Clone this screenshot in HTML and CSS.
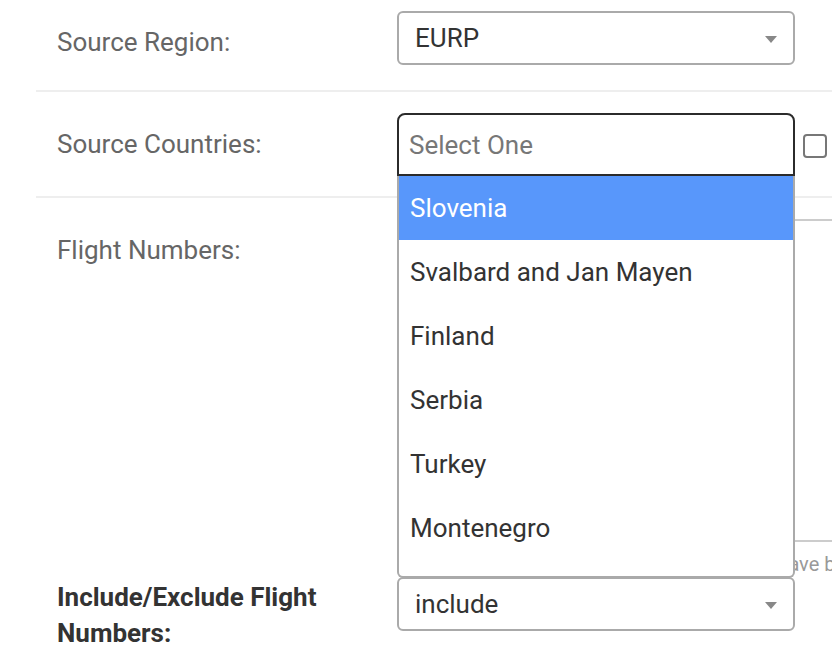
FILE: index.html
```html
<!DOCTYPE html>
<html>
<head>
<meta charset="utf-8">
<link rel="stylesheet" href="styles.css">
</head>
<body>
<div class="form">
  <div class="row first">
    <div class="label">Source Region:</div>
    <div class="control">
      <div class="select"><span class="value">EURP</span><span class="arrow"></span></div>
    </div>
  </div>
  <div class="row second">
    <div class="label">Source Countries:</div>
    <div class="control with-check">
      <div class="select-wrap">
        <div class="select open"><span class="placeholder">Select One</span></div>
        <ul class="dropdown">
          <li class="hl">Slovenia</li>
          <li>Svalbard and Jan Mayen</li>
          <li>Finland</li>
          <li>Serbia</li>
          <li>Turkey</li>
          <li>Montenegro</li>
          <li>Albania</li>
        </ul>
      </div>
      <span class="checkbox"></span>
    </div>
  </div>
  <div class="row flights">
    <div class="label">Flight Numbers:</div>
    <div class="control">
      <div class="textarea"></div>
      <div class="help">Leave blank for all flights.</div>
    </div>
  </div>
  <div class="row last">
    <div class="label bold">Include/Exclude Flight Numbers:</div>
    <div class="control">
      <div class="select"><span class="value">include</span><span class="arrow"></span></div>
    </div>
  </div>
</div>
</body>
</html>
```

FILE: styles.css
```css
html, body {
  margin: 0;
  padding: 0;
  background: #fff;
  overflow: hidden;
  width: 832px;
  height: 658px;
}
body {
  font-family: Roboto, "Liberation Sans", sans-serif;
}
.form {
  margin-left: 36px;
  margin-top: -10px;
  width: 1000px;
  display: flex;
  flex-direction: column;
}
.row {
  display: grid;
  grid-template-columns: 361px 1fr;
  padding: 21px 0 20px;
  border-bottom: 2px solid #eee;
}
.row.first {
  padding-bottom: 25px;
}
.row.flights {
  border-bottom: none;
  padding-bottom: 1px;
}
.row.last {
  border-bottom: none;
  padding-top: 0;
}
.label {
  padding-left: 21px;
  padding-top: 16px;
  font-size: 26px;
  line-height: 30px;
  color: #666;
  white-space: nowrap;
}
.label.bold {
  font-weight: 700;
  color: #333;
  line-height: 36px;
  padding-top: 2px;
  width: 300px;
  white-space: normal;
}
.control {
  display: flex;
  flex-direction: column;
}
.control.with-check {
  flex-direction: row;
  align-items: center;
  gap: 8px;
}
.select-wrap {
  position: relative;
}
.select {
  box-sizing: border-box;
  width: 398px;
  height: 54px;
  border: 2px solid #aaa;
  border-radius: 6px;
  display: flex;
  align-items: center;
  justify-content: space-between;
  padding: 0 16px 0 16px;
  font-size: 26px;
  color: #333;
  background: #fff;
}
.select.open {
  height: 63px;
  border-color: #2b2b2b;
  border-radius: 8px 8px 0 0;
  padding-left: 10px;
}
.placeholder {
  color: #777;
}
.arrow {
  width: 0;
  height: 0;
  border-left: 6.5px solid transparent;
  border-right: 6.5px solid transparent;
  border-top: 7px solid #888;
  margin-top: 2px;
}
.dropdown {
  position: absolute;
  top: 63px;
  left: 0;
  width: 398px;
  height: 402px;
  box-sizing: border-box;
  margin: 0;
  padding: 0;
  list-style: none;
  border: 2px solid #aaa;
  border-top: none;
  border-radius: 0 0 6px 6px;
  background: #fff;
  overflow: hidden;
  z-index: 5;
}
.dropdown li {
  height: 64px;
  line-height: 64px;
  padding-left: 11px;
  font-size: 26px;
  color: #333;
}
.dropdown li.hl {
  background: #5897fb;
  color: #fff;
}
.checkbox {
  box-sizing: border-box;
  width: 24px;
  height: 24px;
  border: 2px solid #777;
  border-radius: 4px;
  margin-top: 3px;
}
.textarea {
  box-sizing: border-box;
  width: 600px;
  height: 323px;
  border: 2px solid #ccc;
  border-radius: 4px;
}
.help {
  font-size: 20px;
  line-height: 24px;
  color: #999;
  margin-top: 10px;
  white-space: nowrap;
  padding-left: 370px;
}
```
